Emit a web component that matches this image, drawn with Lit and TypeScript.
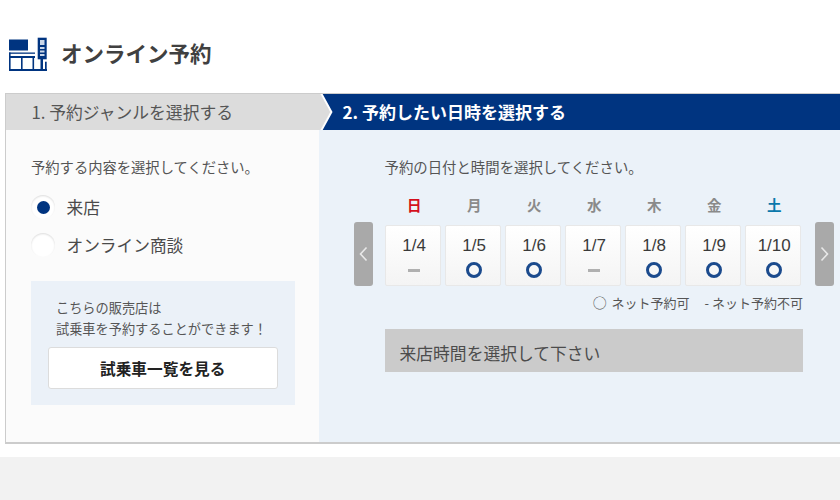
import { LitElement, html, css } from "lit";
import { customElement } from "lit/decorators.js";

const days = [
  { w: "日", d: "1/4", ok: false, cls: "sun" },
  { w: "月", d: "1/5", ok: true, cls: "" },
  { w: "火", d: "1/6", ok: true, cls: "" },
  { w: "水", d: "1/7", ok: false, cls: "" },
  { w: "木", d: "1/8", ok: true, cls: "" },
  { w: "金", d: "1/9", ok: true, cls: "" },
  { w: "土", d: "1/10", ok: true, cls: "sat" },
];

@customElement("app-root")
export class AppRoot extends LitElement {
  static styles = css`
    :host {
      display: block;
      width: 840px;
      height: 500px;
      overflow: hidden;
      background: #fff;
      font-family: "Noto Sans CJK JP", "Noto Sans", sans-serif;
      color: #444;
    }
    .title {
      height: 93px;
      box-sizing: border-box;
      padding: 37px 0 0 9px;
      display: flex;
      align-items: flex-start;
      gap: 14px;
    }
    .title svg { display: block; flex: none; }
    .title h1 {
      margin: 0 0 0 -1px;
      font-size: 21.5px;
      line-height: 32px;
      font-weight: 700;
      color: #404040;
    }
    .panel {
      margin-left: 5px;
      height: 351px;
      box-sizing: border-box;
      border-left: 1.5px solid #ccc;
      border-bottom: 2px solid #ccc;
      border-top: 1px solid #ccc;
      display: flex;
      flex-direction: column;
    }
    .steps { display: flex; height: 36px; flex: none; }
    .step1 {
      width: 312.5px;
      background: #dcdcdc;
      box-sizing: border-box;
      padding-left: 25.5px;
      font-size: 16.8px;
      line-height: 36px;
      color: #555;
      white-space: nowrap;
    }
    .arrow { display: block; flex: none; }
    .step2 {
      flex: 1;
      background: #003480;
      color: #fff;
      font-size: 17px;
      font-weight: 700;
      line-height: 36px;
      padding-left: 10px;
      white-space: nowrap;
    }
    .body { flex: 1; display: flex; min-height: 0; }
    .left {
      width: 312.5px;
      box-sizing: border-box;
      background: #fbfbfb;
      padding: 26px 24px 0 25px;
    }
    .prompt { font-size: 14.3px; line-height: 22px; color: #555; white-space: nowrap; }
    .radios { margin-top: 17px; display: flex; flex-direction: column; gap: 14px; }
    .radio { display: flex; align-items: center; gap: 11.5px; height: 24px; font-size: 16.7px; color: #4a4a4a; }
    .dot {
      width: 24px;
      height: 24px;
      border-radius: 50%;
      background: #fff;
      box-shadow: inset 0 1px 2px rgba(0, 0, 0, 0.14);
      display: flex;
      align-items: center;
      justify-content: center;
    }
    .dot i { width: 13px; height: 13px; border-radius: 50%; background: #003480; display: block; }
    .info {
      margin-top: 24px;
      height: 124px;
      box-sizing: border-box;
      background: #ebf1f8;
      padding: 16px 17px 0 17px;
    }
    .info p {
      margin: 0 0 0 8px;
      font-size: 13.2px;
      line-height: 21px;
      color: #555;
      white-space: nowrap;
    }
    .btn {
      margin-top: 8px;
      height: 42px;
      box-sizing: border-box;
      background: #fff;
      border: 1px solid #dcdcdc;
      border-radius: 3px;
      display: flex;
      align-items: center;
      justify-content: center;
      font-size: 15.7px;
      font-weight: 700;
      color: #222;
    }
    .right {
      flex: 1;
      background: #ebf2f9;
      padding: 26px 0 0 35px;
    }
    .right .prompt { margin-left: 31px; font-size: 14.4px; }
    .weeks { display: flex; gap: 4px; margin: 16px 0 0 31.7px; }
    .wk {
      width: 56px;
      box-sizing: border-box;
      padding-left: 2px;
      text-align: center;
      font-size: 14.5px;
      font-weight: 700;
      line-height: 22px;
      color: #8a8a8a;
    }
    .wk.sun { color: #d40f1c; }
    .wk.sat { color: #0a78ab; }
    .cal { display: flex; align-items: flex-end; margin-top: 6px; height: 64px; }
    .nav {
      width: 19px;
      height: 64px;
      background: #a9a9a9;
      border-radius: 3px;
      display: flex;
      align-items: center;
      justify-content: center;
      flex: none;
    }
    .nav svg { display: block; }
    .cells { display: flex; gap: 4px; margin: 0 14px 0 12.7px; }
    .cell {
      width: 56px;
      height: 61px;
      box-sizing: border-box;
      background: linear-gradient(#ffffff, #f4f4f4);
      border: 1px solid #e8e8e8;
      border-radius: 2px;
      display: flex;
      flex-direction: column;
      align-items: center;
      padding: 9px 0 0 2px;
    }
    .date { font-family: "Liberation Sans", sans-serif; font-size: 17px; line-height: 22px; color: #3a3a3a; }
    .mark { height: 18px; margin-top: 4px; display: flex; align-items: center; justify-content: center; }
    .ring { width: 16.5px; height: 16.5px; box-sizing: border-box; border: 3px solid #1b4a8d; border-radius: 50%; }
    .dash { width: 12px; height: 3px; background: #b0b0b0; }
    .legend {
      width: 418.5px;
      height: 20px;
      margin: 7px 0 0 31px;
      display: flex;
      justify-content: flex-end;
      gap: 15px;
      font-size: 13px;
      line-height: 20px;
      color: #555;
      white-space: nowrap;
    }
    .legend b { font-weight: 400; font-size: 14px; line-height: 0; margin-right: 2px; }
    .time {
      width: 418px;
      height: 43px;
      margin: 16px 0 0 31px;
      box-sizing: border-box;
      background: #cbcbcb;
      padding-left: 15px;
      font-size: 16.8px;
      line-height: 48px;
      color: #4c4c4c;
      white-space: nowrap;
      overflow: hidden;
    }
    .footer { margin-top: 13px; height: 43px; background: #f2f2f2; }
  `;

  render() {
    return html`
      <div class="title">
        <svg width="39" height="35" viewBox="0 0 39 35">
          <g fill="#003480">
            <rect x="0" y="2.5" width="19" height="11" />
            <rect x="0" y="15.5" width="26" height="1.3" />
            <rect x="0" y="19" width="26" height="2" />
            <rect x="0" y="15.5" width="1.6" height="18" />
            <rect x="12" y="19" width="1.6" height="14" />
            <rect x="23.5" y="19" width="1.6" height="14" />
            <rect x="0" y="32" width="38" height="2" />
            <rect x="28.7" y="0.7" width="9" height="21.6" />
            <rect x="31.5" y="22" width="2.5" height="10" />
            <rect x="36" y="24.7" width="1.7" height="8" />
          </g>
          <g fill="#c9d6e8">
            <rect x="31" y="3" width="4.5" height="5" />
            <rect x="31" y="10" width="4.5" height="2" />
            <rect x="31" y="13.5" width="4.5" height="2" />
            <rect x="31" y="17" width="4.5" height="2" />
          </g>
        </svg>
        <h1>オンライン予約</h1>
      </div>
      <div class="panel">
        <div class="steps">
          <div class="step1">1. 予約ジャンルを選択する</div>
          <svg class="arrow" width="14" height="36" viewBox="0 0 14 36">
            <rect width="14" height="36" fill="#003480" />
            <polygon points="0,0 2,0 12,18 2,36 0,36" fill="#dcdcdc" />
            <polyline points="2,-1 12.4,18 2,37" fill="none" stroke="#fff" stroke-width="2" />
          </svg>
          <div class="step2">2. 予約したい日時を選択する</div>
        </div>
        <div class="body">
          <div class="left">
            <div class="prompt">予約する内容を選択してください。</div>
            <div class="radios">
              <div class="radio"><span class="dot"><i></i></span>来店</div>
              <div class="radio"><span class="dot"></span>オンライン商談</div>
            </div>
            <div class="info">
              <p>こちらの販売店は<br />試乗車を予約することができます！</p>
              <div class="btn">試乗車一覧を見る</div>
            </div>
          </div>
          <div class="right">
            <div class="prompt">予約の日付と時間を選択してください。</div>
            <div class="weeks">
              ${days.map((d) => html`<div class="wk ${d.cls}">${d.w}</div>`)}
            </div>
            <div class="cal">
              <div class="nav">
                <svg width="9" height="16" viewBox="0 0 9 16" fill="none">
                  <polyline points="7.5,1.5 1.5,8 7.5,14.5" stroke="#e8e8e8" stroke-width="1.6" />
                </svg>
              </div>
              <div class="cells">
                ${days.map(
                  (d) => html`<div class="cell">
                    <div class="date">${d.d}</div>
                    <div class="mark">${d.ok ? html`<div class="ring"></div>` : html`<div class="dash"></div>`}</div>
                  </div>`
                )}
              </div>
              <div class="nav">
                <svg width="9" height="16" viewBox="0 0 9 16" fill="none">
                  <polyline points="1.5,1.5 7.5,8 1.5,14.5" stroke="#e8e8e8" stroke-width="1.6" />
                </svg>
              </div>
            </div>
            <div class="legend"><span><b>○</b> ネット予約可</span><span>- ネット予約不可</span></div>
            <div class="time">来店時間を選択して下さい</div>
          </div>
        </div>
      </div>
      <div class="footer"></div>
    `;
  }
}
